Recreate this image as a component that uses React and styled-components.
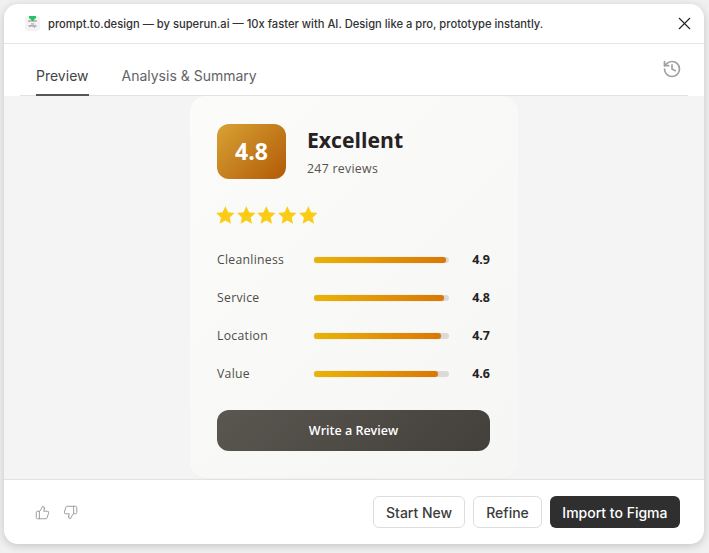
import styled, { createGlobalStyle } from "styled-components";
import { History, ThumbsDown, ThumbsUp, X } from "lucide-react";

const GlobalStyle = createGlobalStyle`
  html, body {
    margin: 0;
    height: 100%;
    background: #f0f0f0;
    font-family: Inter, "Liberation Sans", sans-serif;
  }
`;

const Page = styled.div`
  width: 709px;
  height: 553px;
  padding: 4px 5px 9px 4px;
  box-sizing: border-box;
`;

const Modal = styled.div`
  height: 100%;
  display: flex;
  flex-direction: column;
  background: #fff;
  border-radius: 14px;
  overflow: hidden;
  box-shadow: 0 2px 8px rgba(0, 0, 0, 0.18);
`;

const TitleBar = styled.div`
  height: 39px;
  flex: none;
  display: flex;
  align-items: center;
  padding: 0 9px 0 21px;
  gap: 8px;
  border-bottom: 1px solid #e5e5e5;
`;

const Logo = styled.div`
  width: 15px;
  height: 15px;
  flex: none;
  border-radius: 3px;
  background: #f3f3f3;
  display: flex;
  flex-direction: column;
  align-items: center;
`;

const LogoText = styled.span`
  font-size: 2.5px;
  line-height: 2.6px;
  color: #555;
  text-align: center;
`;

const Title = styled.div`
  flex: 1;
  font-size: 11.2px;
  font-weight: 500;
  color: #333;
  white-space: nowrap;
`;

const CloseIcon = styled(X)`
  width: 21px;
  height: 21px;
  color: #222;
`;

const TabBar = styled.div`
  height: 51px;
  flex: none;
  display: flex;
  align-items: flex-end;
  justify-content: space-between;
  margin: 0 16px;
  padding: 0 0 0 16px;
  border-bottom: 1px solid #e2e2e2;
`;

const Tabs = styled.div`
  display: flex;
  gap: 33px;
`;

const Tab = styled.div`
  height: 38px;
  box-sizing: border-box;
  padding-top: 8px;
  font-size: 14px;
  line-height: 20px;
  color: ${(props) => (props.$active ? "#444" : "#5f6368")};
  margin-bottom: -1px;
  border-bottom: 2px solid ${(props) => (props.$active ? "#555" : "transparent")};
`;

const HistoryIcon = styled(History)`
  width: 20px;
  height: 20px;
  color: #a0a0a0;
  margin: 0 6px 16px 0;
`;

const Content = styled.div`
  flex: 1;
  min-height: 0;
  background: #f4f4f4;
  display: flex;
  justify-content: center;
  font-family: "Open Sans", "Noto Sans", sans-serif;
`;

const Card = styled.div`
  width: 328px;
  height: 383px;
  box-sizing: border-box;
  padding: 28px 28px 0 27px;
  background: linear-gradient(135deg, #fbfbfa, #f6f6f4);
  border-radius: 16px;
  border-bottom: 1px solid #f0f0ee;
`;

const Head = styled.div`
  display: flex;
  align-items: center;
  gap: 21px;
`;

const Badge = styled.div`
  width: 69px;
  height: 55px;
  box-sizing: border-box;
  padding-bottom: 2px;
  border-radius: 12px;
  background: linear-gradient(135deg, #d8a233, #b25a08);
  color: #fff;
  font-size: 23px;
  font-weight: 700;
  display: flex;
  align-items: center;
  justify-content: center;
`;

const HeadText = styled.div`
  display: flex;
  flex-direction: column;
  gap: 5px;
  padding-bottom: 2px;
`;

const Rating = styled.div`
  font-size: 21.2px;
  line-height: 30px;
  font-weight: 700;
  color: #25221f;
`;

const Count = styled.div`
  font-size: 12.3px;
  line-height: 17px;
  letter-spacing: 0.3px;
  color: #55524e;
`;

const Stars = styled.div`
  display: flex;
  margin: 26px 0 25px -2px;
`;

const Rows = styled.div`
  display: flex;
  flex-direction: column;
  gap: 20px;
`;

const Row = styled.div`
  height: 18px;
  display: grid;
  grid-template-columns: 97px 135px 1fr;
  align-items: center;
`;

const Label = styled.div`
  font-size: 12.2px;
  letter-spacing: 0.3px;
  color: #4f4c48;
`;

const Track = styled.div`
  height: 6px;
  border-radius: 3px;
  background: #dcdad8;
`;

const Fill = styled.div`
  height: 100%;
  border-radius: 3px;
  background: linear-gradient(90deg, #eab308, #d97706);
  box-shadow: 0 0 1px rgba(217, 119, 6, 0.5);
`;

const Score = styled.div`
  font-size: 12.5px;
  font-weight: 700;
  color: #25221f;
  text-align: right;
`;

const ReviewButton = styled.div`
  height: 41px;
  margin-top: 27px;
  border-radius: 12px;
  background: linear-gradient(135deg, #5a5650, #43403b);
  color: #fff;
  font-size: 12.5px;
  font-weight: 600;
  display: flex;
  align-items: center;
  justify-content: center;
`;

const Footer = styled.div`
  flex: none;
  height: 65px;
  box-sizing: border-box;
  border-top: 1px solid #e2e2e2;
  display: flex;
  align-items: center;
  justify-content: space-between;
  padding: 0 24px 0 31px;
`;

const Votes = styled.div`
  display: flex;
  gap: 13px;
  color: #999;
`;

const Actions = styled.div`
  display: flex;
  gap: 8px;
`;

const Button = styled.div`
  height: 32px;
  box-sizing: border-box;
  padding: 0 ${(props) => (props.$primary ? "12.5px" : "12px")};
  border-radius: 6px;
  font-size: 14px;
  font-weight: 500;
  display: flex;
  align-items: center;
  color: ${(props) => (props.$primary ? "#fff" : "#3c3c3c")};
  background: ${(props) => (props.$primary ? "#2f2f2f" : "#fff")};
  border: ${(props) => (props.$primary ? "none" : "1px solid #ddd")};
`;

const Star = () => (
  <svg width="20.67" height="20.67" viewBox="0 0 24 24" fill="#facc15">
    <path d="M12 1.5l3.2 6.9 7.5.9-5.6 5.1 1.5 7.4L12 18.1l-6.6 3.7 1.5-7.4-5.6-5.1 7.5-.9z" />
  </svg>
);

const scores = [
  { label: "Cleanliness", value: 4.9 },
  { label: "Service", value: 4.8 },
  { label: "Location", value: 4.7 },
  { label: "Value", value: 4.6 },
];

export default function App() {
  return (
    <Page>
      <GlobalStyle />
      <Modal>
        <TitleBar>
          <Logo>
            <svg width="7" height="5" viewBox="0 0 7 5">
              <path d="M0 0h7v2L3.5 5 0 2z" fill="#22c55e" />
            </svg>
            <LogoText>prompt</LogoText>
            <LogoText>to</LogoText>
            <LogoText>Design</LogoText>
          </Logo>
          <Title>prompt.to.design — by superun.ai — 10x faster with AI. Design like a pro, prototype instantly.</Title>
          <CloseIcon strokeWidth={1.3} />
        </TitleBar>
        <TabBar>
          <Tabs>
            <Tab $active>Preview</Tab>
            <Tab>Analysis &amp; Summary</Tab>
          </Tabs>
          <HistoryIcon strokeWidth={2} />
        </TabBar>
        <Content>
          <Card>
            <Head>
              <Badge>4.8</Badge>
              <HeadText>
                <Rating>Excellent</Rating>
                <Count>247 reviews</Count>
              </HeadText>
            </Head>
            <Stars>
              {[0, 1, 2, 3, 4].map((i) => (
                <Star key={i} />
              ))}
            </Stars>
            <Rows>
              {scores.map((s) => (
                <Row key={s.label}>
                  <Label>{s.label}</Label>
                  <Track>
                    <Fill style={{ width: `${(s.value / 5) * 100}%` }} />
                  </Track>
                  <Score>{s.value}</Score>
                </Row>
              ))}
            </Rows>
            <ReviewButton>Write a Review</ReviewButton>
          </Card>
        </Content>
        <Footer>
          <Votes>
            <ThumbsUp size={15} strokeWidth={1.5} />
            <ThumbsDown size={15} strokeWidth={1.5} />
          </Votes>
          <Actions>
            <Button>Start New</Button>
            <Button>Refine</Button>
            <Button $primary>Import to Figma</Button>
          </Actions>
        </Footer>
      </Modal>
    </Page>
  );
}
